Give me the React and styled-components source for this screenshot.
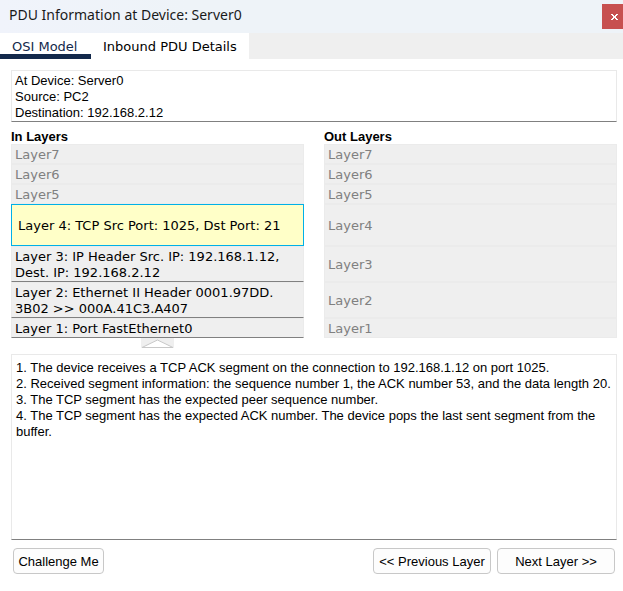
import React, { useState } from "react";
import styled, { createGlobalStyle, css } from "styled-components";

const sans = '"Liberation Sans", Arial, sans-serif';
const wide = '"DejaVu Sans", Verdana, sans-serif';

const GlobalStyle = createGlobalStyle`
  *, *::before, *::after { box-sizing: border-box; }
  body { margin: 0; background: #fff; color: #000; font: 13px/16px ${sans}; }
  button { margin: 0; border: 0; font: inherit; color: inherit; cursor: pointer; }
`;

const Window = styled.div`
  display: flex;
  flex-direction: column;
  min-height: 100vh;
`;

const TitleBar = styled.header`
  display: flex;
  align-items: center;
  justify-content: space-between;
  height: 33px;
  padding-left: 9px;
  background: linear-gradient(90deg, #f0f3fb, #eef3f8 30%);
`;

const Title = styled.h1`
  margin: 0;
  padding-bottom: 4px;
  font: 400 14px/20px "Noto Sans", "Segoe UI", sans-serif;
  color: #1a1a1a;
`;

const CloseButton = styled.button`
  display: flex;
  align-items: center;
  justify-content: center;
  width: 21px;
  height: 25px;
  padding: 0 0 0 4px;
  background: #c75050;
`;

const TabList = styled.div`
  display: flex;
  height: 26px;
  background: #efefef;
`;

const Tab = styled.button`
  min-width: 91px;
  padding: 6px 12px 0;
  border-bottom: 5px solid #fff;
  background: #fff;
  font: 13px/16px ${wide};
  text-align: left;
  white-space: nowrap;
  ${(p) => p.$active && css`
    border-bottom-color: #13294b;
    color: #13294b;
  `}
`;

const Content = styled.main`
  display: flex;
  flex: 1;
  flex-direction: column;
  padding: 11px 6px 17px 11px;
`;

const TextPanel = styled.section`
  padding: 2px 3px 0;
  border: 1px solid #e9e9e9;
  border-bottom-color: #808080;
`;

const Details = styled(TextPanel)`
  flex: 1;
  margin-top: 6px;
  padding: 5px 4px 4px;
`;

const Line = styled.p`
  margin: 0;
`;

const Columns = styled.div`
  display: grid;
  grid-template-columns: 1fr 1fr;
  column-gap: 20px;
  margin-top: 8px;
`;

const Column = styled.section`
  display: flex;
  flex-direction: column;
`;

const Heading = styled.h2`
  margin: 0;
  font: 700 13px/14px ${sans};
`;

const rowHeights = { single: "20px", double: "36px", tall: "42px" };

const Layer = styled.button`
  min-height: ${(p) => rowHeights[p.$size]};
  padding: 2px 3px 0;
  border: 1px solid #ebebeb;
  background: #efefef;
  font: 13px/16px ${wide};
  text-align: left;
  ${(p) => p.$filled && css`
    border-bottom-color: #808080;
  `}
  ${(p) => p.$selected && css`
    padding: 2px 6px 0;
    border-color: #00b0e8;
    background: #ffffc8;
  `}
  &:disabled { color: #808080; cursor: default; }
`;

const ArrowButton = styled.button`
  display: block;
  align-self: center;
  width: 33px;
  height: 10px;
  padding: 0;
  background: #efefef;
  svg { display: block; }
`;

const Footer = styled.footer`
  display: flex;
  gap: 6px;
  margin-top: 8px;
  padding: 0 2px;
`;

const PushButton = styled.button`
  height: 26px;
  min-width: ${(p) => (p.$wide ? "118px" : "91px")};
  padding: 2px 4px 0;
  border: 1px solid #c8c8c8;
  border-radius: 4px;
  background: #fdfdfd;
`;

const Spacer = styled.div`
  flex: 1;
`;

const inLayers = [
  { lines: ["Layer7"], size: "single" },
  { lines: ["Layer6"], size: "single" },
  { lines: ["Layer5"], size: "single" },
  { lines: ["Layer 4: TCP Src Port: 1025, Dst Port: 21"], size: "tall", selected: true },
  { lines: ["Layer 3: IP Header Src. IP: 192.168.1.12,", "Dest. IP: 192.168.2.12"], size: "double", filled: true },
  { lines: ["Layer 2: Ethernet II Header 0001.97DD.", "3B02 >> 000A.41C3.A407"], size: "double", filled: true },
  { lines: ["Layer 1: Port FastEthernet0"], size: "single", filled: true },
];

const outLayers = [
  ["Layer7", "single"],
  ["Layer6", "single"],
  ["Layer5", "single"],
  ["Layer4", "tall"],
  ["Layer3", "double"],
  ["Layer2", "double"],
  ["Layer1", "single"],
];

const notes = [
  "1. The device receives a TCP ACK segment on the connection to 192.168.1.12 on port 1025.",
  "2. Received segment information: the sequence number 1, the ACK number 53, and the data length 20.",
  "3. The TCP segment has the expected peer sequence number.",
  "4. The TCP segment has the expected ACK number. The device pops the last sent segment from the buffer.",
];

export default function App() {
  const [tab, setTab] = useState("osi");
  return (
    <Window>
      <GlobalStyle />
      <TitleBar>
        <Title>PDU Information at Device: Server0</Title>
        <CloseButton aria-label="Close">
          <svg width="7" height="6" viewBox="0 0 7 6" shapeRendering="crispEdges" fill="#fff">
            <path d="M0 0h2v1h1v1h1V1h1V0h2v1H6v1H5v2h1v1h1v1H5V5H4V4H3v1H2v1H0V5h1V4h1V2H1V1H0z" />
          </svg>
        </CloseButton>
      </TitleBar>
      <TabList role="tablist">
        <Tab role="tab" aria-selected={tab === "osi"} $active={tab === "osi"} onClick={() => setTab("osi")}>
          OSI Model
        </Tab>
        <Tab role="tab" aria-selected={tab === "in"} $active={tab === "in"} onClick={() => setTab("in")}>
          Inbound PDU Details
        </Tab>
      </TabList>
      <Content>
        <TextPanel>
          <Line>At Device: Server0</Line>
          <Line>Source: PC2</Line>
          <Line>Destination: 192.168.2.12</Line>
        </TextPanel>
        <Columns>
          <Column>
            <Heading>In Layers</Heading>
            {inLayers.map((l) => (
              <Layer
                key={l.lines[0]}
                $size={l.size}
                $filled={l.filled}
                $selected={l.selected}
                disabled={!l.filled && !l.selected}
              >
                {l.lines.map((t) => (
                  <Line key={t}>{t}</Line>
                ))}
              </Layer>
            ))}
            <ArrowButton aria-label="Move up">
              <svg width="33" height="10" viewBox="0 0 33 10">
                <path d="M1 9.5L16.5 2L32 9.5z" fill="#fff" stroke="#c8c8c8" />
              </svg>
            </ArrowButton>
          </Column>
          <Column>
            <Heading>Out Layers</Heading>
            {outLayers.map(([name, size]) => (
              <Layer key={name} $size={size} disabled>
                {name}
              </Layer>
            ))}
          </Column>
        </Columns>
        <Details>
          {notes.map((n) => (
            <Line key={n}>{n}</Line>
          ))}
        </Details>
        <Footer>
          <PushButton>Challenge Me</PushButton>
          <Spacer />
          <PushButton $wide>&lt;&lt; Previous Layer</PushButton>
          <PushButton $wide>Next Layer &gt;&gt;</PushButton>
        </Footer>
      </Content>
    </Window>
  );
}
